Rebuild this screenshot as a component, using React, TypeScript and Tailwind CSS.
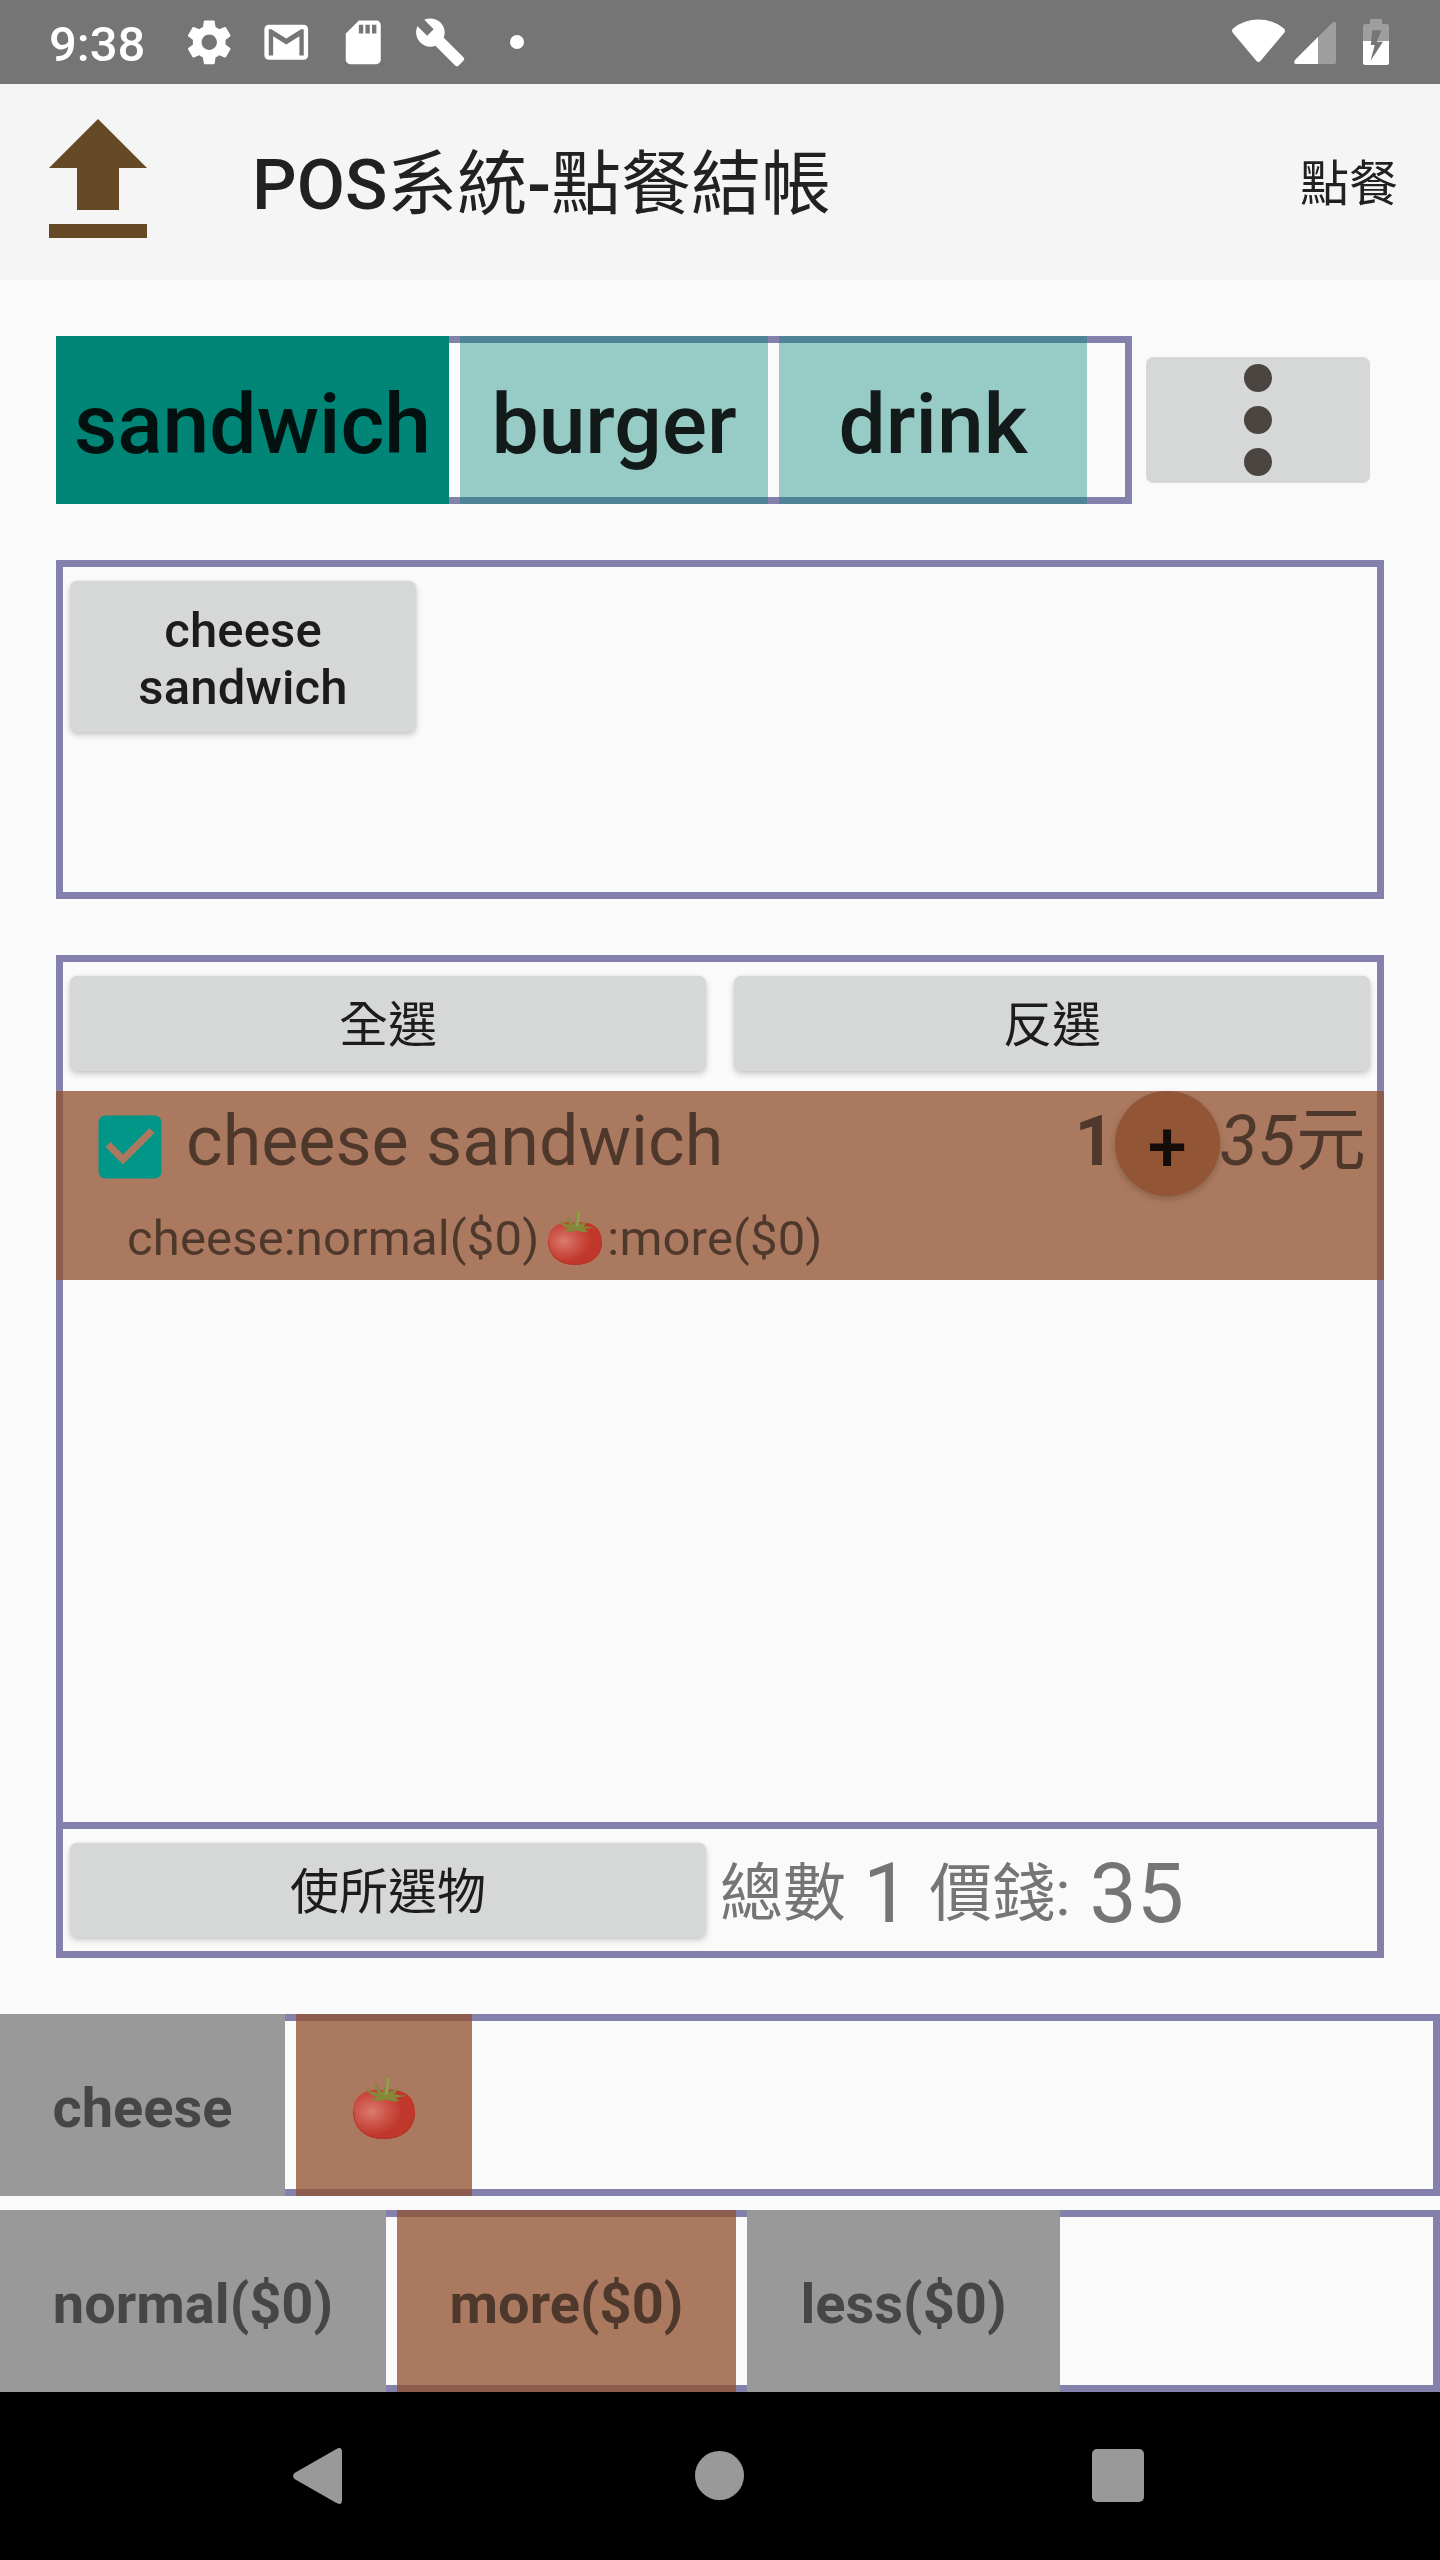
import React from "react";

const CJK = "font-['Noto_Sans_CJK_TC',sans-serif] font-normal";

function Tomato({ className }: { className: string }) {
  return (
    <svg viewBox="0 0 62 62" className={className}>
      <defs>
        <radialGradient id="tomatoBody" cx="0.3" cy="0.44" r="0.5">
          <stop offset="0" stopColor="#d97b70" />
          <stop offset="0.55" stopColor="#cc5246" />
          <stop offset="1" stopColor="#c0372b" />
        </radialGradient>
      </defs>
      <path d="M31 13.500C44 11 62 15 62 35C62 52 50 62 31 62C12 62 0 52 0 34C0 15 20 11 31 13.500Z" fill="url(#tomatoBody)" />
      <path d="M0.6 34C0.6 51 13 61.500 31 61.500C49 61.500 61.500 51 61.500 35" fill="none" stroke="#b0352a" strokeWidth="1" />
      <path d="M13 10C17 14 20 16 25 15.500C22 12 21.500 8 22.500 4C24 9 26 13 30 15C32 10 32.500 5 32.300 0.8L37.500 0C37 6 36 10 36 14.500C40 14 43 12.500 45.300 10C45 13 43 15.500 41 17C45 18.500 49 18.500 53.300 18.500C49 20 45 20.500 42 20C43 21.500 44.500 22.500 46.500 24C42 25 37 24 34 22.500C29 24 23 24 17.500 23C20 22 22.500 21 24 19.500C18 19 14.500 15 13 10Z" fill="#84893a" />
      <path d="M33.500 1L37 0.500C36.500 7 35.500 12 34.500 17.500L31.500 18C33 12 33.500 7 33.500 1Z" fill="#9a9853" />
    </svg>
  );
}

function StatusBar() {
  return (
    <header className="flex h-[84px] items-center bg-[#757575] pl-[49px] pr-[51px] text-white">
      <span className="mt-[5px] w-[134px] text-[49px] leading-[58px] font-medium">9:38</span>
      <div className="flex items-center gap-[24.6px]">
        <svg viewBox="0 0 24 24" className="size-[52.5px]" fill="currentColor">
          <path d="M19.43 12.98c.04-.32.07-.64.07-.98s-.03-.66-.07-.98l2.11-1.650c.19-.15.24-.42.12-.64l-2-3.460c-.12-.22-.39-.3-.61-.22l-2.490 1c-.52-.4-1.080-.73-1.690-.98l-.38-2.650C14.460 2.180 14.250 2 14 2h-4c-.25 0-.46.18-.49.42l-.38 2.650c-.61.25-1.170.59-1.690.98l-2.490-1c-.23-.09-.49 0-.61.22l-2 3.460c-.13.22-.07.49.12.64l2.110 1.650c-.04.32-.07.65-.07.98s.03.66.07.98l-2.110 1.650c-.19.15-.24.42-.12.64l2 3.460c.12.22.39.3.61.22l2.490-1c.52.4 1.080.73 1.690.98l.38 2.650c.03.24.24.42.49.42h4c.25 0 .46-.18.49-.42l.38-2.650c.61-.25 1.170-.59 1.690-.98l2.490 1c.23.09.49 0 .61-.22l2-3.460c.12-.22.07-.49-.12-.64l-2.110-1.650zM12 15.500c-1.930 0-3.500-1.570-3.500-3.500s1.570-3.500 3.500-3.500 3.500 1.570 3.500 3.500-1.570 3.500-3.500 3.500z" />
        </svg>
        <svg viewBox="0 0 24 24" className="size-[52.5px]" fill="currentColor">
          <path d="M20 4H4c-1.100 0-2 .9-2 2v12c0 1.100.9 2 2 2h16c1.100 0 2-.9 2-2V6c0-1.100-.9-2-2-2zm0 14h-2V9.250L12 13 6 9.250V18H4V6h1.200l6.800 4.250L18.800 6H20v12z" />
        </svg>
        <svg viewBox="0 0 24 24" className="size-[52.5px]" fill="currentColor">
          <path d="M18 2h-8L4.020 8 4 20c0 1.100.9 2 2 2h12c1.100 0 2-.9 2-2V4c0-1.100-.9-2-2-2zm-6 6h-2V4h2v4zm3 0h-2V4h2v4zm3 0h-2V4h2v4z" />
        </svg>
        <svg viewBox="0 0 24 24" className="size-[52.5px]" fill="currentColor">
          <path d="M22.700 19l-9.100-9.100c.9-2.300.4-5-1.500-6.900-2-2-5-2.400-7.400-1.300L9 6 6 9 1.600 4.700C.4 7.100.9 10.100 2.900 12.100c1.900 1.900 4.600 2.400 6.900 1.500l9.100 9.100c.4.4 1 .4 1.400 0l2.300-2.300c.5-.4.5-1.100.1-1.400z" />
        </svg>
      </div>
      <span className="ml-[43px] size-[14px] rounded-full bg-white" />
      <div className="ml-auto flex items-start gap-[9px]">
        <svg viewBox="0 0 53 46" className="h-[46px] w-[53px]" fill="currentColor">
          <path d="M1 14Q-1 12 1 9.500Q12 0.500 26.500 0.500Q41 0.500 52 9.500Q54 12 52 14L28.500 42Q26.500 44 24.500 42Z" />
        </svg>
        <svg viewBox="0 0 42 46" className="h-[46px] w-[42px]" fill="currentColor">
          <path d="M1 41L38 4Q42 1 42 5V43Q42 45 40 45H2Q-1 45 1 41Z" opacity="0.3" />
          <path d="M1 41L24 18V45H2Q-1 45 1 41Z" />
        </svg>
        <svg viewBox="0 0 26 46" className="ml-[18px] h-[46px] w-[26px]" fill="currentColor">
          <path d="M7 0H19V5H24Q26 5 26 7V22H14L18.600 11.300H9.500L8 22H0V7Q0 5 2 5H7Z" opacity="0.3" />
          <path d="M0 22H8.500L7.600 26H11.700L7.600 41.700L20 22.700H14V22H26V44Q26 46 24 46H2Q0 46 0 44Z" />
        </svg>
      </div>
    </header>
  );
}

function AppBar() {
  return (
    <div className="flex h-[196px] items-center bg-[#f5f5f5] pr-[42px] pl-[49px] text-[#212121]">
      <svg viewBox="0 0 98 119" className="mb-[7px] h-[119px] w-[98px]" fill="#654924">
        <path d="M49 0L98 49H70V91H28V49H0Z" />
        <path d="M0 105H98V119H0Z" />
      </svg>
      <h1 className="ml-[105px] text-[70px] leading-[82px] font-medium">
        POS<span className={CJK}>系統</span>-<span className={CJK}>點餐結帳</span>
      </h1>
      <span className={"mb-1 ml-auto text-[49px] leading-[58px] " + CJK}>點餐</span>
    </div>
  );
}

function CategoryTab({ label, active }: { label: string; active?: boolean }) {
  return (
    <button
      className={
        "h-[168px] pt-[9px] text-center text-[84px] leading-[98px] font-medium text-black/87 " +
        (active ? "w-[393px] bg-[#008577]" : "w-[308px] bg-[#008577]/40")
      }
    >
      {label}
    </button>
  );
}

function GreyButton({ className, children }: { className: string; children: React.ReactNode }) {
  return (
    <button
      className={
        "flex items-center justify-center rounded-[7px] bg-[#d6d8d7] text-center text-[49px] leading-[57px] text-[#1c1c1c] shadow-[0_3px_6px_rgba(0,0,0,0.2),0_0_3px_rgba(0,0,0,0.06)] " +
        className
      }
    >
      {children}
    </button>
  );
}

function OptionTab({ className, children }: { className: string; children: React.ReactNode }) {
  return (
    <button
      className={"flex h-[182px] items-center justify-center pt-[6px] text-[56px] leading-[66px] font-bold text-black/54 " + className}
    >
      {children}
    </button>
  );
}

function OrderRow() {
  return (
    <div className="-mx-[7px] mt-5 h-[189px] bg-[#92502e]/76 text-black/54">
      <div className="flex h-[105px] items-center pr-[18px] pl-8">
        <svg viewBox="0 0 24 24" className="mt-[6px] size-[84px]" fill="#009788">
          <path d="M19 3H5c-1.110 0-2 .9-2 2v14c0 1.100.89 2 2 2h14c1.110 0 2-.9 2-2V5c0-1.100-.89-2-2-2zm-9 14l-5-5 1.410-1.410L10 14.170l7.590-7.590L19 8l-9 9z" />
        </svg>
        <span className="mb-[5px] ml-[14px] text-[70px] leading-[82px]">cheese sandwich</span>
        <span className="mb-[5px] ml-auto text-[70px] leading-[82px] font-bold">1</span>
        <button className="flex size-[105px] items-center justify-center rounded-full bg-[#925536] pt-[7px] text-[70px] leading-[82px] font-medium text-[#140c08] shadow-[0_3px_7px_rgba(0,0,0,0.2)]">
          +
        </button>
        <span className="mb-[11px] text-[70px] leading-[82px] italic">
          35<span className={CJK + " not-italic"}>元</span>
        </span>
      </div>
      <div className="flex h-[84px] items-center pl-[71px] text-[49px] leading-[57px] tracking-[0.15px]">
        cheese:normal($0)
        <Tomato className="mr-[5px] ml-[9px] size-[54px]" />
        :more($0)
      </div>
    </div>
  );
}

export default function App() {
  return (
    <div className="flex h-[2560px] w-[1440px] flex-col overflow-hidden bg-[#fafafa] font-['Roboto','Noto_Sans_CJK_TC',sans-serif]">
      <StatusBar />
      <AppBar />

      <main className="flex flex-col gap-14 px-14 pt-14">
        <div className="flex items-center">
          <div className="h-[168px] w-[1076px] border-[7px] border-[#8482ac]">
            <div className="-mt-[7px] -ml-[7px] flex gap-[11px]">
              <CategoryTab label="sandwich" active />
              <CategoryTab label="burger" />
              <CategoryTab label="drink" />
            </div>
          </div>
          <button className="ml-[14px] flex h-[126px] w-[224px] flex-col items-center justify-center gap-[14px] rounded-[7px] bg-[#d6d8d7]">
            <span className="size-7 rounded-full bg-[#4b4541]" />
            <span className="size-7 rounded-full bg-[#4b4541]" />
            <span className="size-7 rounded-full bg-[#4b4541]" />
          </button>
        </div>

        <section className="h-[339px] border-[7px] border-[#8482ac] px-[7px] pt-[14px]">
          <GreyButton className="h-[151px] w-[346px] pt-[5px] font-medium tracking-[0.15px]">
            <span className="w-[240px]">cheese sandwich</span>
          </GreyButton>
        </section>

        <section className="flex h-[1003px] flex-col border-[7px] border-[#8482ac]">
          <div className="flex justify-between px-[7px] pt-[14px]">
            <GreyButton className={"h-[95px] w-[636px] pb-[6px] " + CJK}>全選</GreyButton>
            <GreyButton className={"h-[95px] w-[636px] pb-[6px] " + CJK}>反選</GreyButton>
          </div>
          <OrderRow />
          <div className="mt-auto flex h-[129px] border-t-[7px] border-[#8482ac] px-[7px] pt-[14px]">
            <GreyButton className={"h-[94px] w-[636px] pb-[6px] " + CJK}>使所選物</GreyButton>
            <div className="ml-[14px] flex h-[94px] items-center pt-2 text-[84px] leading-[98px] text-[#757575]">
              <span className="text-[63px]">總數</span>
              <span className="ml-[17px]">1</span>
              <span className="ml-[19px] text-[63px]">價錢:</span>
              <span className="ml-[19px]">35</span>
            </div>
          </div>
        </section>
      </main>

      <div className="mt-14 flex flex-col gap-[14px]">
        <div className="h-[182px] border-[7px] border-[#8482ac]">
          <div className="-mt-[7px] -ml-[7px] flex gap-[11px]">
            <OptionTab className="w-[285px] bg-[#999999]">cheese</OptionTab>
            <OptionTab className="w-[176px] bg-[#92502e]/76">
              <Tomato className="size-[62px]" />
            </OptionTab>
          </div>
        </div>
        <div className="h-[182px] border-[7px] border-[#8482ac]">
          <div className="-mt-[7px] -ml-[7px] flex gap-[11px]">
            <OptionTab className="w-[386px] bg-[#999999]">normal($0)</OptionTab>
            <OptionTab className="w-[339px] bg-[#92502e]/76">more($0)</OptionTab>
            <OptionTab className="w-[313px] bg-[#999999]">less($0)</OptionTab>
          </div>
        </div>
      </div>

      <nav className="flex h-[168px] items-center bg-black pb-[1px] pl-[293px]">
        <svg viewBox="0 0 49 56" className="h-[56px] w-[49px]" fill="#999999">
          <path d="M1.500 25L43 1.200Q49 -2 49 4V52Q49 58 43 54.800L1.500 31Q-1.500 28 1.500 25Z" />
        </svg>
        <span className="ml-[353px] size-[49px] rounded-full bg-[#999999]" />
        <span className="ml-[348px] h-[53px] w-[52px] rounded-[5px] bg-[#999999]" />
      </nav>
    </div>
  );
}
